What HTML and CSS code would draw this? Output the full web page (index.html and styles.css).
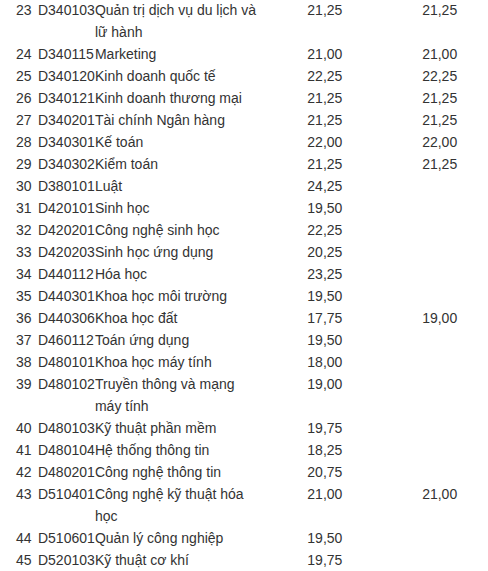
FILE: index.html
```html
<!DOCTYPE html>
<html lang="vi">
<head>
    <meta charset="UTF-8">
    <title>Điểm chuẩn</title>
    <link rel="stylesheet" href="styles.css">
</head>
<body>
    <table class="score-table">
        <tr><td>23</td><td>D340103</td><td>Quản trị dịch vụ du lịch và lữ hành</td><td>21,25</td><td>21,25</td></tr>
        <tr><td>24</td><td>D340115</td><td>Marketing</td><td>21,00</td><td>21,00</td></tr>
        <tr><td>25</td><td>D340120</td><td>Kinh doanh quốc tế</td><td>22,25</td><td>22,25</td></tr>
        <tr><td>26</td><td>D340121</td><td>Kinh doanh thương mại</td><td>21,25</td><td>21,25</td></tr>
        <tr><td>27</td><td>D340201</td><td>Tài chính Ngân hàng</td><td>21,25</td><td>21,25</td></tr>
        <tr><td>28</td><td>D340301</td><td>Kế toán</td><td>22,00</td><td>22,00</td></tr>
        <tr><td>29</td><td>D340302</td><td>Kiểm toán</td><td>21,25</td><td>21,25</td></tr>
        <tr><td>30</td><td>D380101</td><td>Luật</td><td>24,25</td><td></td></tr>
        <tr><td>31</td><td>D420101</td><td>Sinh học</td><td>19,50</td><td></td></tr>
        <tr><td>32</td><td>D420201</td><td>Công nghệ sinh học</td><td>22,25</td><td></td></tr>
        <tr><td>33</td><td>D420203</td><td>Sinh học ứng dụng</td><td>20,25</td><td></td></tr>
        <tr><td>34</td><td>D440112</td><td>Hóa học</td><td>23,25</td><td></td></tr>
        <tr><td>35</td><td>D440301</td><td>Khoa học môi trường</td><td>19,50</td><td></td></tr>
        <tr><td>36</td><td>D440306</td><td>Khoa học đất</td><td>17,75</td><td>19,00</td></tr>
        <tr><td>37</td><td>D460112</td><td>Toán ứng dụng</td><td>19,50</td><td></td></tr>
        <tr><td>38</td><td>D480101</td><td>Khoa học máy tính</td><td>18,00</td><td></td></tr>
        <tr><td>39</td><td>D480102</td><td>Truyền thông và mạng máy tính</td><td>19,00</td><td></td></tr>
        <tr><td>40</td><td>D480103</td><td>Kỹ thuật phần mềm</td><td>19,75</td><td></td></tr>
        <tr><td>41</td><td>D480104</td><td>Hệ thống thông tin</td><td>18,25</td><td></td></tr>
        <tr><td>42</td><td>D480201</td><td>Công nghệ thông tin</td><td>20,75</td><td></td></tr>
        <tr><td>43</td><td>D510401</td><td>Công nghệ kỹ thuật hóa học</td><td>21,00</td><td>21,00</td></tr>
        <tr><td>44</td><td>D510601</td><td>Quản lý công nghiệp</td><td>19,50</td><td></td></tr>
        <tr><td>45</td><td>D520103</td><td>Kỹ thuật cơ khí</td><td>19,75</td><td></td></tr>
    </table>
</body>
</html>
```

FILE: styles.css
```css
body {
    margin: 0;
    background: #ffffff;
    font-family: 'Liberation Sans', Arial, sans-serif;
    font-size: 14px;
    color: #333;
}

.score-table {
    border-collapse: collapse;
    table-layout: fixed;
    margin: -1px 0 0 16px;
}

.score-table td {
    padding: 0;
    line-height: 22px;
    vertical-align: top;
    text-align: left;
}

/* độ rộng từng cột */
.score-table td:nth-child(1) { width: 22px; }
.score-table td:nth-child(2) { width: 57px; }
.score-table td:nth-child(3) { width: 164px; }

.score-table td:nth-child(4),
.score-table td:nth-child(5) {
    width: 66px;
    padding-left: 49px;
}
```
